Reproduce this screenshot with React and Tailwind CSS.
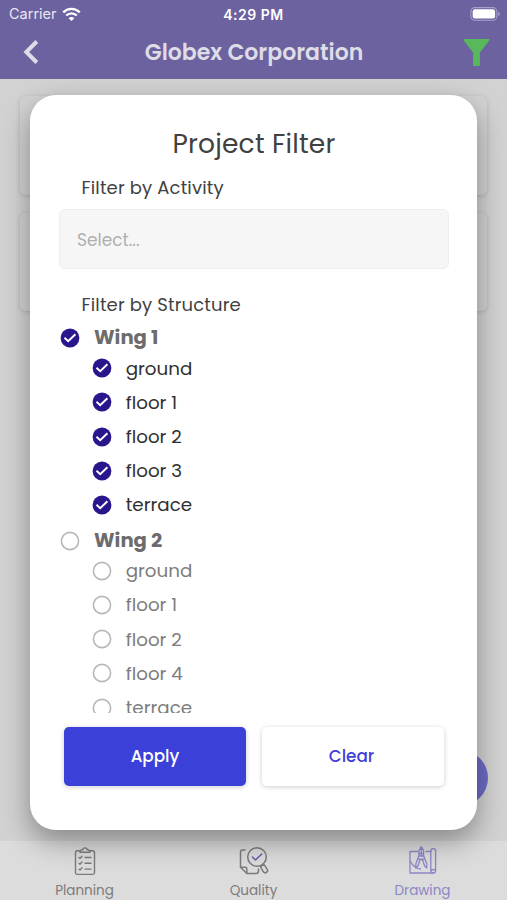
import React from "react";

const wings = [
  { name: "Wing 1", checked: true, floors: ["ground", "floor 1", "floor 2", "floor 3", "terrace"] },
  { name: "Wing 2", checked: false, floors: ["ground", "floor 1", "floor 2", "floor 4", "terrace"] },
];

function RoundCheck({ checked }) {
  return (
    <svg width="20" height="20" viewBox="0 0 20 20" fill="none" className="shrink-0">
      {checked ? (
        <>
          <circle cx="10" cy="10" r="9.4" fill="#2a168c" />
          <path d="M4.5 9.8 8.2 13.3 15.4 6.2" stroke="#fff" strokeWidth="1.9" />
        </>
      ) : (
        <circle cx="10" cy="10" r="8.6" stroke="#b8b8b8" strokeWidth="1.6" />
      )}
    </svg>
  );
}

function PlanningIcon() {
  return (
    <svg width="22" height="30" viewBox="0 0 22 30" fill="none" stroke="#7b7b7b" strokeWidth="1.4" strokeLinecap="round" strokeLinejoin="round">
      <path d="M6 4.8H3.3a1.8 1.8 0 0 0-1.8 1.8v20a1.8 1.8 0 0 0 1.8 1.8h15.4a1.8 1.8 0 0 0 1.8-1.8v-20a1.8 1.8 0 0 0-1.8-1.8H16" />
      <path d="M6 6.2V4.7l2.8-1.2C9.3 1.3 12.7 1.3 13.2 3.5L16 4.7v1.5Z" />
      <path d="m5 11.6 1 .9 2-2.3M11 11.5h6M5 17.4l1 .9L8 16M11 17.3h6M5 23.2l1 .9 2-2.3M11 23.1h6" />
    </svg>
  );
}

function QualityIcon() {
  return (
    <svg width="30" height="30" viewBox="0 0 30 30" fill="none" stroke="#7b7b7b" strokeWidth="1.5" strokeLinecap="round" strokeLinejoin="round">
      <path d="M6 4H3.5A2 2 0 0 0 1.5 6v15.2l6.3 6.3H17a2.5 2.5 0 0 0 2.5-2.5v-2" />
      <path d="M1.5 21.2h4.8a1.5 1.5 0 0 1 1.5 1.5v4.8" />
      <circle cx="18" cy="11" r="9.3" />
      <path d="m21.4 20.6 3.7-2 3 4.6a2.2 2.2 0 0 1-3.7 2.6l-3-5.2Z" />
      <path d="m13.5 11 3 3 6.2-6" stroke="#625eb0" />
    </svg>
  );
}

function DrawingIcon() {
  return (
    <svg width="28" height="30" viewBox="0 0 28 30" fill="none" stroke="#8b86c6" strokeWidth="1.3" strokeLinecap="round" strokeLinejoin="round">
      <path d="M9 5.5H1V27h23.5M17 5.5h4.8" />
      <path d="M21.8 24.3V5a2.4 2.4 0 0 1 4.8 0v20a2 2 0 0 1-2.1 2c-1.5 0-2.7-1-2.7-2.7 1.2-1 3-.9 4.2-.2" />
      <path d="M11.4 3.2v-2h1.7v2M9.9 10V5a2.3 2.3 0 0 1 4.7 0v5M9.9 9.5 6.8 18v4l2-1.8 2.4-6.7h2.2l2.4 6.7 2 1.8v-4l-3.2-8.5M9.9 10h4.7M10.2 7.5h4M9 13.2h6.6M12.2 3v7" />
      <path d="M1.5 15.5c2.2 4.4 5.5 7 10 7.6" />
    </svg>
  );
}

export default function App() {
  return (
    <div className="relative w-[507px] h-[900px] overflow-hidden bg-[#d2d2d2] flex flex-col font-['Poppins','Inter',sans-serif]">
      {/* Status bar + title */}
      <header className="relative z-10 h-[79px] shrink-0 bg-[#6b629f] flex flex-col">
        <div className="h-7 grid grid-cols-3 items-center pl-[9px] pr-[6px] text-white font-['Inter',sans-serif]">
          <div className="flex items-center gap-1.5">
            <span className="w-[47px] whitespace-nowrap text-[14.5px] text-[#e9e7f2]">Carrier</span>
            <svg width="19" height="15" viewBox="0 0 19 15" fill="none" stroke="#fff" strokeWidth="2.4">
              <path d="M1.2 5.3c4.7-4.6 11.9-4.6 16.6 0M4.2 8.5c3-2.9 7.6-2.9 10.6 0" />
              <path d="M6.6 11.2c1.7-1.6 4.1-1.6 5.8 0L9.5 14Z" fill="#fff" stroke="none" />
            </svg>
          </div>
          <span className="-ml-[3px] text-center text-[14px] font-semibold tracking-[0.5px] whitespace-nowrap">4:29 PM</span>
          <svg width="31" height="15" viewBox="0 0 31 15" className="justify-self-end">
            <rect x=".9" y=".6" width="26" height="12.6" rx="4" fill="none" stroke="#a7a1c8" strokeWidth="1.1" />
            <rect x="2.7" y="2.3" width="22.4" height="9.2" rx="2.2" fill="#fff" />
            <path d="M28.3 4.5v5c2-.8 2-4.2 0-5" fill="#a7a1c8" />
          </svg>
        </div>
        <div className="h-12 flex items-center justify-between pl-[23px] pr-[17px]">
          <svg width="17" height="26" viewBox="0 0 17 26" fill="none" stroke="#dedce6" strokeWidth="4">
            <path d="M13.8 2.5 3.3 13l10.5 10.5" />
          </svg>
          <h1 className="pl-[5px] text-[22px] font-semibold text-[#dedce6] whitespace-nowrap">Globex Corporation</h1>
          <svg width="27" height="27" viewBox="0 0 27 27" fill="#58b85c">
            <path d="M1.3 0h24.4a.8.8 0 0 1 .5 1.4L16.9 13.6V26a1 1 0 0 1-1 1h-4.8a1 1 0 0 1-1-1V13.6L.8 1.4A.8.8 0 0 1 1.3 0Z" />
          </svg>
        </div>
      </header>

      {/* Dimmed project list */}
      <main className="flex-1 px-5 pt-[17px] flex flex-col gap-[18px]">
        <div className="h-[99px] shrink-0 rounded-md bg-[#d3d3d3] shadow-[0_1px_4px_rgba(0,0,0,0.15)]" />
        <div className="h-[98px] shrink-0 rounded-md bg-[#d3d3d3] shadow-[0_1px_4px_rgba(0,0,0,0.15)]" />
      </main>
      <div className="absolute left-[431.5px] top-[750px] size-14 rounded-full bg-[#6e6bc6]" />

      {/* Bottom tabs */}
      <nav className="h-[59px] shrink-0 bg-[#dcdcdc] grid grid-cols-3 text-[13.5px] leading-5 text-[#7b7b7b]">
        <div className="flex flex-col items-center gap-[5px] pt-[5px]">
          <PlanningIcon />
          <span>Planning</span>
        </div>
        <div className="flex flex-col items-center gap-[5px] pt-[5px]">
          <QualityIcon />
          <span>Quality</span>
        </div>
        <div className="flex flex-col items-center gap-[5px] pt-[5px] text-[#8b86c6]">
          <DrawingIcon />
          <span>Drawing</span>
        </div>
      </nav>

      {/* Filter dialog */}
      <section className="absolute left-[30px] top-[95px] w-[447px] h-[735px] rounded-[26px] bg-white pl-[29px] pr-7 flex flex-col shadow-[0_11px_28px_rgba(0,0,0,0.36)]">
        <h2 className="mt-[31px] h-9 leading-9 text-center text-[26.5px] tracking-[0.2px] text-[#414141]">Project Filter</h2>
        <h3 className="mt-[8px] h-9 leading-9 pl-[22.5px] text-[18px] tracking-[0.15px] text-[#414141]">Filter by Activity</h3>
        <div className="mt-[3px] h-[60px] shrink-0 rounded-md border border-[#eeeeee] bg-[#f6f6f6] pl-[17px] pt-[3px] flex items-center text-[17px] text-[#b0b0b0]">
          Select...
        </div>
        <h3 className="mt-[18px] h-9 leading-9 pl-[22.5px] text-[18px] tracking-[0.15px] text-[#414141]">Filter by Structure</h3>
        <div className="mt-[2px] h-[388px] shrink-0 overflow-hidden flex flex-col gap-[5.7px]">
          {wings.map((wing) => (
            <div key={wing.name} className="shrink-0">
              <div className="h-[26px] pl-[1.4px] flex items-center gap-[13.6px]">
                <RoundCheck checked={wing.checked} />
                <span className="text-[19.6px] font-bold text-[#6c6c6c]">{wing.name}</span>
              </div>
              {wing.floors.map((floor) => (
                <div key={floor} className="h-[34.2px] pl-[33.3px] pt-[0.4px] flex items-center gap-[13.4px]">
                  <RoundCheck checked={wing.checked} />
                  <span className={wing.checked ? "text-[18.3px] text-[#303030]" : "text-[18.3px] text-[#7d7d7d]"}>{floor}</span>
                </div>
              ))}
            </div>
          ))}
        </div>
        <div className="mt-[14px] pl-[5px] pr-[5px] flex gap-4 text-[16.8px] font-medium">
          <button className="w-[182px] h-[59px] rounded-[5px] bg-[#3b40d8] text-white shadow-[0_1px_5px_rgba(0,0,0,0.2)]">Apply</button>
          <button className="w-[182px] h-[59px] pr-[3px] rounded-[5px] bg-white text-[#4140d6] shadow-[0_1px_5px_rgba(0,0,0,0.2)]">Clear</button>
        </div>
      </section>
    </div>
  );
}
